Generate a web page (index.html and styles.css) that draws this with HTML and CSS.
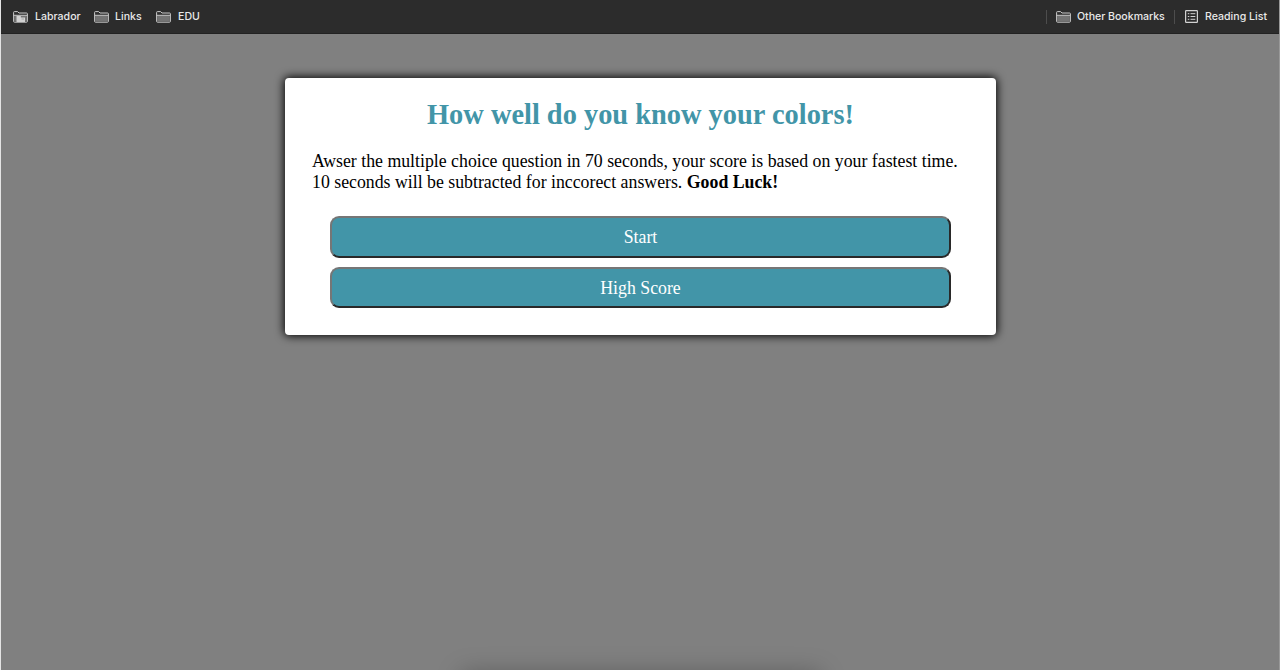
FILE: index.html
```html
<!DOCTYPE html>
<html lang="en">
<head>
<meta charset="utf-8">
<title>Color Quiz</title>
<link rel="stylesheet" href="styles.css">
</head>
<body>
<svg class="defs" aria-hidden="true">
  <symbol id="folder" viewBox="0 0 15 12">
    <path d="M.6 10.4V1.4Q.6 .6 1.4 .6H4.6L6 2H13.6Q14.4 2 14.4 2.8V10.4Q14.4 11.2 13.6 11.2H1.4Q.6 11.2 .6 10.4Z" fill="#303030" stroke="#c9c9c9"/>
    <path d="M1.1 4.5H13.9V10.7H1.1Z" fill="#747474"/>
    <path d="M.6 4.3H14.4" stroke="#c9c9c9"/>
  </symbol>
</svg>
<nav class="bookmarks">
  <div class="group">
    <a class="item labrador"><svg class="folder" viewBox="0 0 15 12"><use href="#folder"/><path d="M3.5 5H7.8V6.5H12V11H3.5Z" fill="#d2d2d2"/><path d="M8.5 8H11" stroke="#999" stroke-width=".8"/></svg><span class="name">Labrador</span></a>
    <a class="item links"><svg class="folder"><use href="#folder"/></svg><span class="name">Links</span></a>
    <a class="item"><svg class="folder"><use href="#folder"/></svg><span class="name">EDU</span></a>
  </div>
  <div class="group">
    <a class="item divided"><svg class="folder"><use href="#folder"/></svg><span class="name">Other Bookmarks</span></a>
    <a class="item divided reading"><svg class="list" viewBox="0 0 13 13" fill="none" stroke="#d2d2d2"><rect x=".6" y=".6" width="11.8" height="11.8" rx=".6" stroke-width="1.2"/><path d="M2.8 3.7H4.3M5.5 3.7H10.3M2.8 6.5H4.3M5.5 6.5H10.3M2.8 9.3H4.3M5.5 9.3H10.3"/></svg><span class="name">Reading List</span></a>
  </div>
</nav>
<main class="page">
  <section class="card">
    <h1 class="title">How well do you know your colors!</h1>
    <p class="intro">Awser the multiple choice question in 70 seconds, your score is based on your fastest time.<br>10 seconds will be subtracted for inccorect answers. <strong>Good Luck!</strong></p>
    <div class="actions">
      <button class="btn">Start</button>
      <button class="btn">High Score</button>
    </div>
  </section>
  <div class="bottom-shade"></div>
</main>
</body>
</html>
```
FILE: styles.css
```css
* { box-sizing: border-box; }
body {
  margin: 0;
  height: 670px;
  overflow: hidden;
  display: flex;
  flex-direction: column;
  background: #808080;
  border-left: 1px solid #e4e4e4;
  border-right: 1px solid #999;
  font-family: "Liberation Serif", "Times New Roman", serif;
}
.defs { position: absolute; width: 0; height: 0; }
.bookmarks {
  height: 34px;
  flex: none;
  display: flex;
  justify-content: space-between;
  padding: 0 11px 0 12px;
  background: #2c2c2c;
  border-bottom: 1px solid #222;
  color: #e8e8e8;
  font: 500 10.6px/14px Inter, sans-serif;
}
.group { display: flex; align-items: center; }
.item { display: flex; align-items: center; height: 14px; margin-right: 14px; white-space: nowrap; }
.folder { width: 15px; height: 12px; margin-right: 7px; flex: none; }
.name { display: block; padding-top: 1px; }
.labrador .name { width: 45px; }
.links .folder { margin-right: 6px; }
.links .name { width: 27px; }
.divided { border-left: 1px solid #4d4d4d; padding-left: 9px; margin-right: 9px; }
.divided .folder { margin-right: 6px; }
.divided .name { width: 88px; letter-spacing: -0.03px; }
.divided.reading { padding-left: 10px; margin-right: 0; }
.divided.reading .name { width: 63px; letter-spacing: 0; }
.list { width: 13px; height: 13px; margin-right: 7px; flex: none; }
.page {
  flex: 1;
  display: flex;
  flex-direction: column;
  align-items: center;
  justify-content: space-between;
  padding: 44px 0 0 1px;
}
.card {
  width: 711px;
  height: 257px;
  padding: 21px 27px 0;
  background: #fff;
  border-radius: 4px;
  box-shadow: 0 0 10px 1px #000;
}
.title {
  margin: 0;
  font-size: 28.4px;
  line-height: 32px;
  text-align: center;
  color: #4295a8;
  white-space: nowrap;
}
.intro {
  margin: 20px 0 0;
  font-size: 17.8px;
  line-height: 20.5px;
  color: #000;
  white-space: nowrap;
}
.actions { display: grid; gap: 9px; padding: 24px 18px 0; }
.btn {
  height: 41.5px;
  padding: 0;
  border: 2px solid;
  border-color: #767676 #292929 #292929 #767676;
  border-radius: 9px;
  background: #4295a8;
  color: #fff;
  font: 17.78px/20px "Liberation Serif", "Times New Roman", serif;
}
.btn + .btn { padding-top: 1px; }
.bottom-shade {
  width: 320px;
  height: 0;
  box-shadow: 0 22px 24px 20px rgba(0, 0, 0, .25);
}
```
